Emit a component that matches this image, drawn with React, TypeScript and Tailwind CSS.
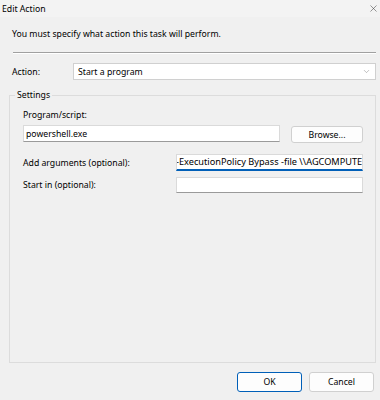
import { ChevronDown, X } from 'lucide-react';

const font = { fontFamily: '"Noto Sans", "Open Sans", sans-serif' };

export default function App() {
  return (
    <div className="w-[380px] h-[400px] bg-[#f0f0f0] text-[8.7px] text-black flex flex-col overflow-hidden" style={font}>
      <div className="h-[17px] shrink-0 bg-[#f3f3f3] flex items-center justify-between pl-[2px] pr-[1px]">
        <span className="leading-[12px]">Edit Action</span>
        <X size={11} strokeWidth={1.1} className="text-[#333]" />
      </div>

      <div className="flex flex-col pl-[12px] pt-[11px]">
        <div className="leading-[12px] h-[12px]">You must specify what action this task will perform.</div>
        <div className="mt-[12px] h-[2px] w-[363px] ml-[1px] border-t border-[#a0a0a0] border-b border-b-white" />

        <div className="flex items-center mt-[9px]">
          <span className="w-[61px] leading-[12px]">Action:</span>
          <div className="w-[303px] h-[17px] bg-white border border-[#d0d0d0] flex items-center justify-between pl-[4px] pr-[4px]">
            <span className="leading-[12px]">Start a program</span>
            <ChevronDown size={9} strokeWidth={1.2} className="text-[#777]" />
          </div>
        </div>

        <div className="relative mt-[15px] ml-[-3px] w-[367px] h-[268px] border border-[#dcdcdc] pl-[13px] pt-[13px]">
          <span className="absolute left-[5px] top-[-7px] bg-[#f0f0f0] px-[2px] leading-[12px]">Settings</span>
          <div className="leading-[12px] h-[12px]">Program/script:</div>
          <div className="flex items-start mt-[4px]">
            <div className="w-[257px] h-[17px] bg-white border border-[#dadada] border-b-[#9a9a9a] flex items-center pl-[2px]">
              <span className="leading-[12px]">powershell.exe</span>
            </div>
            <button className="ml-[11px] mt-[1px] w-[72px] h-[17px] bg-[#fdfdfd] border border-[#d0d0d0] rounded-[3px] leading-[12px]">
              Browse...
            </button>
          </div>

          <div className="flex items-center mt-[11px]">
            <span className="w-[153px] leading-[12px]">Add arguments (optional):</span>
            <div className="w-[187px] h-[17px] bg-white border border-[#dadada] border-b-2 border-b-[#005fb8] flex items-center overflow-hidden whitespace-nowrap">
              <span className="leading-[12px] text-[9.2px] ml-[-1px]">-ExecutionPolicy Bypass -file \\AGCOMPUTER\scripts\task.ps1</span>
            </div>
          </div>

          <div className="flex items-center mt-[6px]">
            <span className="w-[153px] leading-[12px]">Start in (optional):</span>
            <div className="w-[187px] h-[16px] bg-white border border-[#dadada] border-b-[#9a9a9a]" />
          </div>
        </div>

        <div className="flex gap-[7px] mt-[9px] ml-[225px]">
          <button className="w-[65px] h-[20px] bg-[#fdfdfd] border border-[#005fb8] rounded-[3px] leading-[12px]">OK</button>
          <button className="w-[65px] h-[20px] bg-[#fdfdfd] border border-[#d0d0d0] rounded-[3px] leading-[12px]">Cancel</button>
        </div>
      </div>
    </div>
  );
}
